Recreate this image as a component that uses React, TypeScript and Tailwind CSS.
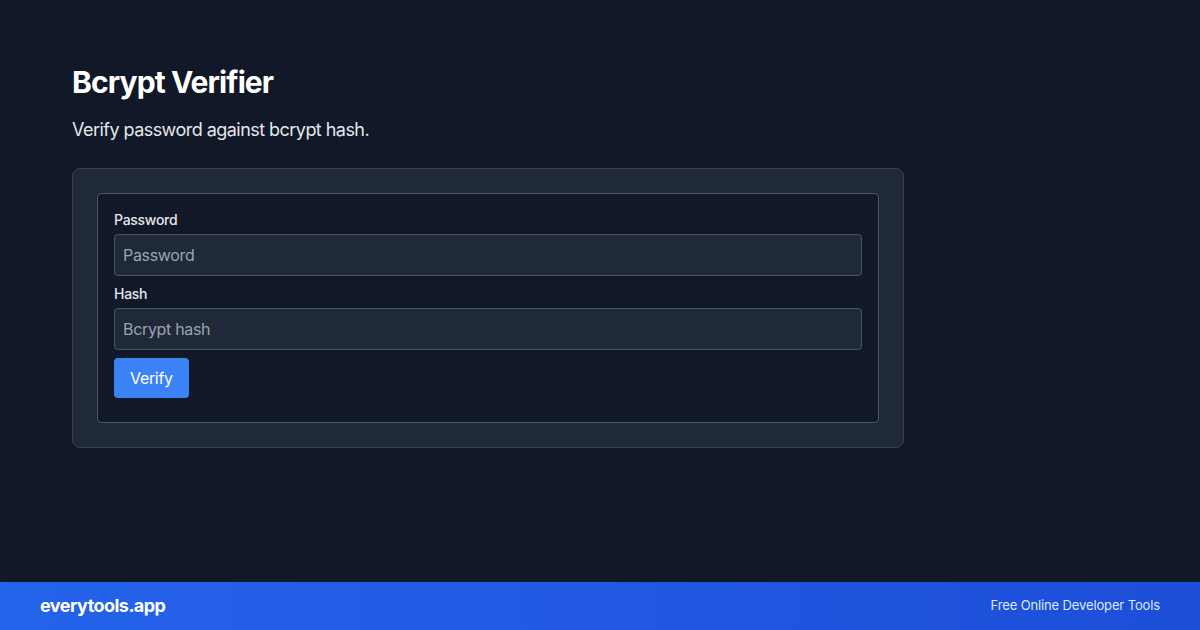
import React from "react";

export default function App() {
  return (
    <div
      className="w-[1200px] h-[630px] bg-[#111827] flex flex-col overflow-hidden"
      style={{ fontFamily: "Inter, 'Noto Sans', sans-serif" }}
    >
      <div className="flex-1 pt-16 px-[72px]">
        <h1 className="text-3xl font-bold text-white tracking-[-0.03em]">Bcrypt Verifier</h1>
        <p className="mt-4 text-lg text-[#e5e7eb] tracking-[-0.03em]">Verify password against bcrypt hash.</p>
        <div className="mt-6 w-[832px] rounded-lg border border-[#374151] bg-[#1f2937] p-6">
          <div className="rounded border border-[#4b5563] bg-[#111827] px-4 pt-4 pb-6">
            <label className="block text-sm font-medium text-[#e5e7eb] mb-1 tracking-[-0.02em]">Password</label>
            <input
              className="block w-full rounded border border-[#4b5563] bg-[#1f2937] px-2 py-2 text-base text-[#e5e7eb] placeholder:text-[#9ca3af] outline-none tracking-[-0.02em]"
              placeholder="Password"
            />
            <label className="block text-sm font-medium text-[#e5e7eb] mt-2 mb-1 tracking-[-0.02em]">Hash</label>
            <input
              className="block w-full rounded border border-[#4b5563] bg-[#1f2937] px-2 py-2 text-base text-[#e5e7eb] placeholder:text-[#9ca3af] outline-none tracking-[-0.02em]"
              placeholder="Bcrypt hash"
            />
            <button className="mt-2 rounded bg-[#3b82f6] px-4 py-2 text-base text-white tracking-[-0.02em]">Verify</button>
          </div>
        </div>
      </div>
      <div className="h-12 shrink-0 bg-gradient-to-r from-[#2563eb] to-[#1d4ed8] flex items-center justify-between px-10">
        <span className="text-lg font-bold text-white tracking-[-0.03em]">everytools.app</span>
        <span className="text-[13px] text-[#dbeafe] tracking-[-0.01em]">Free Online Developer Tools</span>
      </div>
    </div>
  );
}
